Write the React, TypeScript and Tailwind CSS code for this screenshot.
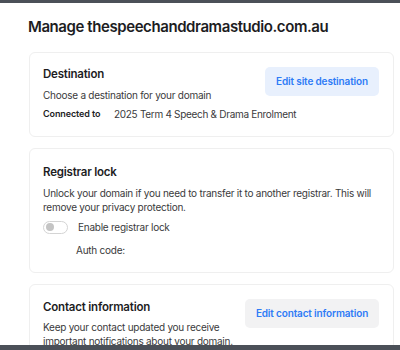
import React from "react";

export default function App() {
  return (
    <div className="w-[400px] h-[350px] overflow-hidden bg-white relative" style={{ fontFamily: "Inter, 'Noto Sans', sans-serif" }}>
      <div className="h-[3px] bg-[#4b5058]" />
      <div className="pl-[29px] pr-[6px]">
        <h1 className="mt-[14px] -ml-[1px] text-[15px] leading-[20px] font-semibold text-[#1d1d1f] tracking-[-0.42px]">
          Manage thespeechanddramastudio.com.au
        </h1>
        <div className="mt-[15px] border border-[#efefef] rounded-[6px] h-[85px] pl-[13px] pr-[14px] pt-[14px] flex justify-between">
          <div className="flex-1 min-w-0">
            <div className="text-[11.5px] leading-[14px] font-semibold text-[#1d1d1f] tracking-[-0.2px]">Destination</div>
            <div className="mt-[7px] text-[10px] leading-[14px] text-[#3a3a3c] tracking-[-0.25px]">Choose a destination for your domain</div>
            <div className="mt-[5px] flex items-center leading-[14px] whitespace-nowrap">
              <span className="font-semibold text-[9px] text-[#1d1d1f] w-[71px] shrink-0 tracking-[-0.1px]">Connected to</span>
              <span className="text-[10px] text-[#3a3a3c] tracking-[-0.3px]">2025 Term 4 Speech &amp; Drama Enrolment</span>
            </div>
          </div>
          <div className="h-[29px] w-[114px] shrink-0 rounded-[5px] bg-[#e8f0fd] text-[#2e7bf6] text-[10px] font-semibold flex items-center justify-center whitespace-nowrap tracking-[-0.15px]">
            Edit site destination
          </div>
        </div>
        <div className="mt-[11px] border border-[#efefef] rounded-[6px] h-[125px] pl-[13px] pr-[14px] pt-[16px]">
          <div className="text-[11.5px] leading-[14px] font-semibold text-[#1d1d1f] tracking-[-0.2px]">Registrar lock</div>
          <div className="mt-[7px] text-[10px] leading-[14px] text-[#3a3a3c] w-[340px] tracking-[-0.25px]">
            Unlock your domain if you need to transfer it to another registrar. This will remove your privacy protection.
          </div>
          <div className="mt-[6px] flex items-center h-[14px]">
            <div className="w-[25px] h-[13px] rounded-full border border-[#d4d4d4] bg-white flex items-center pl-[2px]">
              <div className="w-[8px] h-[8px] rounded-full bg-[#c4c4c4]" />
            </div>
            <span className="ml-[10px] text-[10px] text-[#3a3a3c] tracking-[-0.25px]">Enable registrar lock</span>
          </div>
          <div className="mt-[9px] ml-[33px] text-[10px] leading-[14px] text-[#3a3a3c] tracking-[-0.25px]">Auth code:</div>
        </div>
        <div className="mt-[11px] border border-[#efefef] rounded-[6px] h-[100px] pl-[13px] pr-[14px] pt-[14px] flex justify-between">
          <div className="pt-[1px] flex-1 min-w-0">
            <div className="text-[11.5px] leading-[14px] font-semibold text-[#1d1d1f] tracking-[-0.2px]">Contact information</div>
            <div className="mt-[6px] text-[10px] leading-[14px] text-[#3a3a3c] w-[200px] tracking-[-0.25px]">
              Keep your contact updated you receive important notifications about your domain.
            </div>
          </div>
          <div className="h-[29px] w-[134px] shrink-0 rounded-[5px] bg-[#f2f2f3] text-[#2e7bf6] text-[10px] font-semibold flex items-center justify-center whitespace-nowrap tracking-[-0.15px]">
            Edit contact information
          </div>
        </div>
      </div>
      <div className="absolute left-0 right-0 bottom-0 h-[5px] bg-[#4b5058]" />
    </div>
  );
}
